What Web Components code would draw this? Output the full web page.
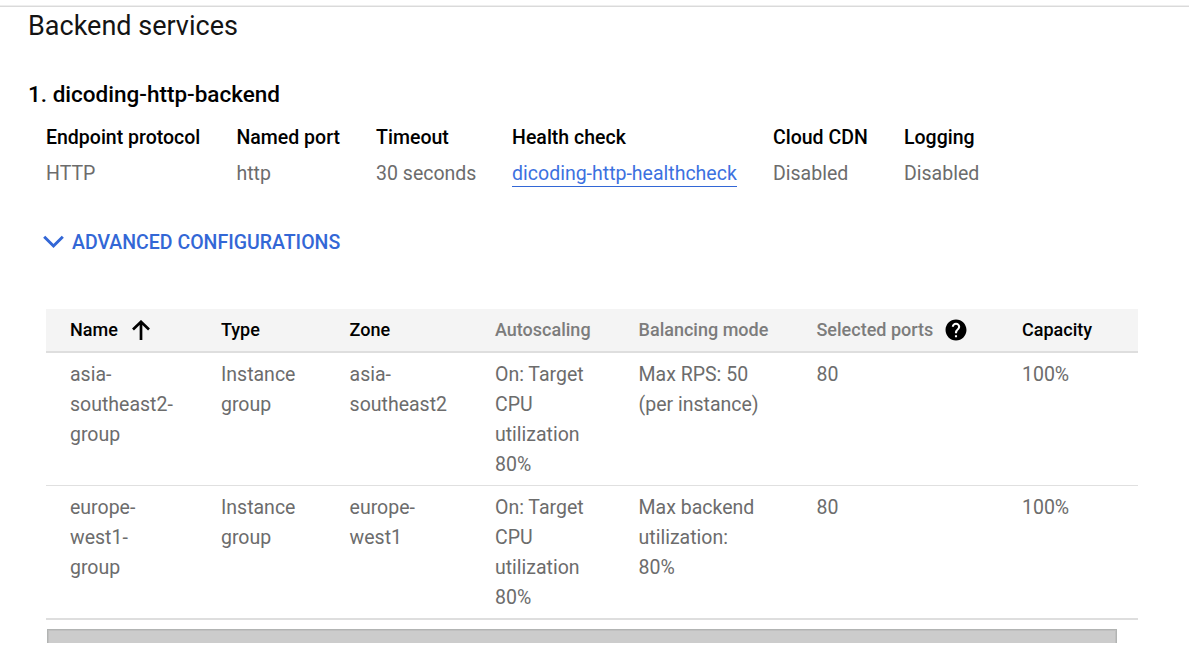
<!DOCTYPE html>
<html lang="en"><head><meta charset="utf-8"><title>Backend services</title>
<style>html,body{margin:0;background:#fff}body{font-family:Roboto,"Liberation Sans",sans-serif;height:670px;overflow:hidden}</style></head>
<body><backend-page></backend-page>
<script>
class Base extends HTMLElement{
  constructor(){super();this.attachShadow({mode:'open'}).innerHTML=this.render();}
}
customElements.define('detail-item',class extends Base{
  render(){return `<style>
:host{display:block;white-space:nowrap;font-size:19.5px;line-height:30px;color:#6c6c6c}
.k{color:#000;font-weight:500;height:36px}
</style><div class="k"><slot name="label"></slot></div><div><slot></slot></div>`}
});
customElements.define('text-link',class extends Base{
  render(){return `<style>:host{display:inline-block;color:#3c71e0;line-height:25px;border-bottom:1px solid #3367d6}</style><slot></slot>`}
});
customElements.define('expand-toggle',class extends Base{
  render(){return `<style>
:host{display:flex;align-items:center;gap:8px;height:30px;color:#3367d6;font-size:19.5px;font-weight:500;white-space:nowrap}
svg{display:block;flex:none}
</style><svg width="21" height="14" viewBox="0 0 21 14"><path d="M1.2 1.8 10.5 11 19.8 1.8" fill="none" stroke="currentColor" stroke-width="3"/></svg><span><slot></slot></span>`}
});
customElements.define('table-row',class extends Base{
  render(){return `<style>
:host{display:grid;grid-template-columns:151px 128.6px 145.4px 143.6px 177.9px 205.5px 1fr;padding:7px 0 5px 24px;box-sizing:border-box;font-size:19.5px;line-height:30px;color:#6c6c6c;border-bottom:1px solid #e0e0e0}
:host([head]){background:#f4f4f4;height:44px;padding:6px 0 6px 24px;font-size:18px;font-weight:500;color:#7c7c7c;border-bottom:2px solid #dedede}
:host([last]){border-bottom:2px solid #dedede}
</style><slot></slot>`}
});
customElements.define('table-cell',class extends Base{
  render(){return `<style>
:host{display:flex;white-space:pre-line}
:host([strong]){color:#000}
::slotted(svg){display:block;flex:none;color:#000}
</style><slot></slot><slot name="icon"></slot>`}
});
customElements.define('scroll-strip',class extends Base{
  render(){return `<style>
:host{display:block;box-sizing:border-box;height:14px;background:#ccc;border:1px solid #b2b4b3;border-bottom:0;box-shadow:inset 1px 1px #c0c0c0,inset -1px 0 #c0c0c0}
</style>`}
});
customElements.define('backend-page',class extends Base{
  render(){return `<style>
:host{display:block}
.rule{margin-top:5px;height:2px;background:linear-gradient(#eee 50%,#dadada 50%)}
h1,h2{margin:0 0 0 28px;font-weight:400;color:#000;white-space:nowrap}
h1{font-size:27px;line-height:36px;margin-top:1px;color:#141414}
h2{font-size:22.5px;line-height:30px;font-weight:500;margin-top:35px}
.kv{display:grid;grid-template-columns:190.5px 139.6px 136px 260.9px 131px auto;margin:14px 0 0 46px}
expand-toggle{margin:38px 0 0 43px}
.table{width:1092px;margin:52px 0 0 46px}
scroll-strip{width:1070px;margin:9px 0 0 47px}
</style>
<div class="rule"></div>
<h1>Backend services</h1>
<h2>1. dicoding-http-backend</h2>
<div class="kv">
<detail-item><span slot="label">Endpoint protocol</span>HTTP</detail-item>
<detail-item><span slot="label">Named port</span>http</detail-item>
<detail-item><span slot="label">Timeout</span>30 seconds</detail-item>
<detail-item><span slot="label">Health check</span><text-link>dicoding-http-healthcheck</text-link></detail-item>
<detail-item><span slot="label">Cloud CDN</span>Disabled</detail-item>
<detail-item><span slot="label">Logging</span>Disabled</detail-item>
</div>
<expand-toggle>ADVANCED CONFIGURATIONS</expand-toggle>
<div class="table">
<table-row head>
<table-cell strong>Name<svg slot="icon" style="margin:5px 0 0 14.500px" width="18" height="21" viewBox="0 0 18 21"><path d="M9 20V2M1 9.500 9 1.800 17 9.500" fill="none" stroke="currentColor" stroke-width="2.700"/></svg></table-cell>
<table-cell strong>Type</table-cell><table-cell strong>Zone</table-cell><table-cell>Autoscaling</table-cell><table-cell>Balancing mode</table-cell>
<table-cell>Selected ports<svg slot="icon" style="margin:3.500px 0 0 11.500px" width="22" height="22" viewBox="1.500 1.500 21 21"><path fill="#fff" d="M7 5h10v15H7z"/><path fill="currentColor" d="M12 2C6.480 2 2 6.480 2 12s4.480 10 10 10 10-4.480 10-10S17.520 2 12 2zm1 17h-2v-2h2v2zm2.070-7.750l-.9.920C13.450 12.900 13 13.500 13 15h-2v-.5c0-1.100.45-2.100 1.170-2.830l1.240-1.260c.37-.36.59-.86.59-1.410 0-1.100-.9-2-2-2s-2 .9-2 2H8c0-2.210 1.790-4 4-4s4 1.790 4 4c0 .88-.36 1.680-.93 2.250z"/></svg></table-cell>
<table-cell strong>Capacity</table-cell>
</table-row>
<table-row>
<table-cell>asia-
southeast2-
group</table-cell><table-cell>Instance
group</table-cell><table-cell>asia-
southeast2</table-cell><table-cell>On: Target
CPU
utilization
80%</table-cell><table-cell>Max RPS: 50
(per instance)</table-cell><table-cell>80</table-cell><table-cell>100%</table-cell>
</table-row>
<table-row last>
<table-cell>europe-
west1-
group</table-cell><table-cell>Instance
group</table-cell><table-cell>europe-
west1</table-cell><table-cell>On: Target
CPU
utilization
80%</table-cell><table-cell>Max backend
utilization:
80%</table-cell><table-cell>80</table-cell><table-cell>100%</table-cell>
</table-row>
</div>
<scroll-strip></scroll-strip>`}
});
</script></body></html>
